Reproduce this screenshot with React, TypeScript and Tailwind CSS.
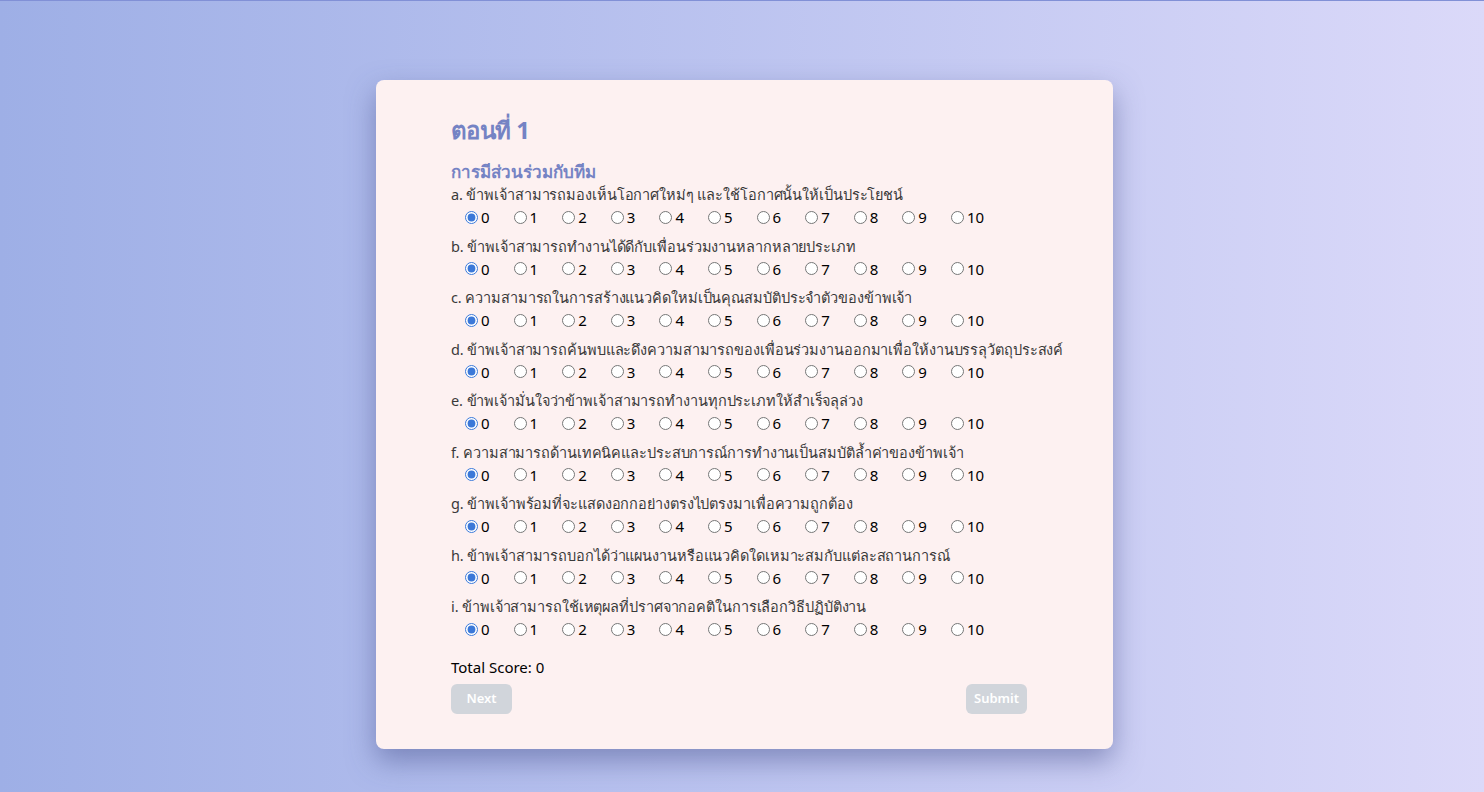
import { useState } from "react";

const questions = [
  "a. ข้าพเจ้าสามารถมองเห็นโอกาศใหม่ๆ และใช้โอกาศนั้นให้เป็นประโยชน์",
  "b. ข้าพเจ้าสามารถทำงานได้ดีกับเพื่อนร่วมงานหลากหลายประเภท",
  "c. ความสามารถในการสร้างแนวคิดใหม่เป็นคุณสมบัติประจำตัวของข้าพเจ้า",
  "d. ข้าพเจ้าสามารถค้นพบและดึงความสามารถของเพื่อนร่วมงานออกมาเพื่อให้งานบรรลุวัตถุประสงค์",
  "e. ข้าพเจ้ามั่นใจว่าข้าพเจ้าสามารถทำงานทุกประเภทให้สำเร็จลุล่วง",
  "f. ความสามารถด้านเทคนิคและประสบการณ์การทำงานเป็นสมบัติล้ำค่าของข้าพเจ้า",
  "g. ข้าพเจ้าพร้อมที่จะแสดงอกกอย่างตรงไปตรงมาเพื่อความถูกต้อง",
  "h. ข้าพเจ้าสามารถบอกได้ว่าแผนงานหรือแนวคิดใดเหมาะสมกับแต่ละสถานการณ์",
  "i. ข้าพเจ้าสามารถใช้เหตุผลที่ปราศจากอคติในการเลือกวิธีปฏิบัติงาน",
];

const options = [0, 1, 2, 3, 4, 5, 6, 7, 8, 9, 10];

export default function App() {
  const [answers, setAnswers] = useState<number[]>(questions.map(() => 0));
  const total = 0;

  return (
    <div
      className="min-h-[792px] w-full border-t border-[#8190d6] bg-gradient-to-r from-[#9eafe6] to-[#dbd9f9] pt-[79px]"
      style={{ fontFamily: '"Noto Sans", "Liberation Sans", sans-serif' }}
    >
      <div className="ml-[376px] h-[669px] w-[737px] rounded-lg bg-[#fdf1f1] pl-[75px] pt-[34px] shadow-[0_12px_28px_rgba(70,80,140,0.5)]">
        <div className="w-[576px]">
          <h1 className="text-[24px] font-bold leading-[32px] tracking-tight text-[#7583c4]">ตอนที่ 1</h1>
          <h2 className="mt-[15px] text-[17px] font-bold leading-[22px] text-[#7583c4]">การมีส่วนร่วมกับทีม</h2>
          <div className="flex flex-col">
            {questions.map((q, qi) => (
              <div key={qi} className="h-[51.5px]">
                <div className="whitespace-nowrap text-[14.5px] leading-[22px] tracking-[-0.1px] text-[#3a3a3a]">{q}</div>
                <div className="flex pl-[14px] pt-[2px]">
                  {options.map((o) => (
                    <label key={o} className="flex w-[48.6px] items-center text-[15px] leading-[20px] text-black">
                      <input
                        type="radio"
                        name={`q${qi}`}
                        checked={answers[qi] === o}
                        onChange={() => setAnswers(answers.map((a, i) => (i === qi ? o : a)))}
                        className="m-0 mr-[3px] h-[13px] w-[13px] accent-[#3b78d8]"
                      />
                      {o}
                    </label>
                  ))}
                </div>
              </div>
            ))}
          </div>
          <div className="mt-[10px] text-[15px] leading-[20px] text-black">Total Score: {total}</div>
          <div className="mt-[7px] flex justify-between">
            <button className="h-[30px] w-[61px] rounded-md bg-[#d1d5db] text-[13px] font-semibold text-white">Next</button>
            <button className="h-[30px] w-[61px] rounded-md bg-[#d1d5db] text-[13px] font-semibold text-white">Submit</button>
          </div>
        </div>
      </div>
    </div>
  );
}
